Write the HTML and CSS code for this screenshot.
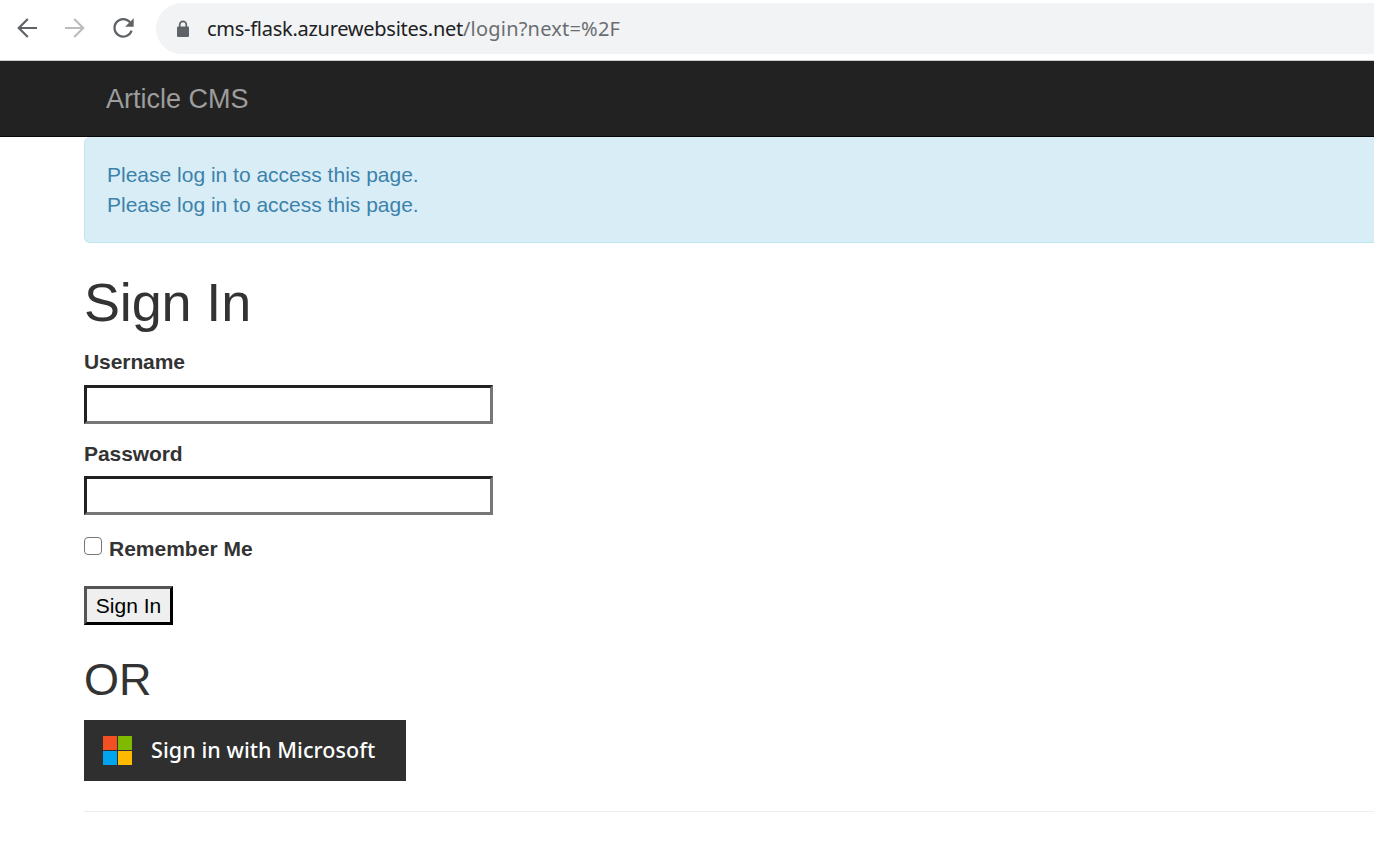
FILE: index.html
```html
<!DOCTYPE html>
<html lang="en">
<head>
<meta charset="utf-8">
<title>Article CMS</title>
<link rel="stylesheet" href="styles.css">
</head>
<body>
<div class="toolbar">
  <svg class="nav-icon" viewBox="0 0 24 24"><path d="M22 12H4M12.800 3L3.800 12l9 9"/></svg>
  <svg class="nav-icon disabled" viewBox="0 0 24 24"><path d="M2 12h18M11.200 3l9 9-9 9"/></svg>
  <svg class="nav-icon" viewBox="0 0 24 24"><path d="M19 6.200A8.800 8.800 0 1 0 20.600 14.700"/><path class="solid" d="M22.700 2.200v8.600h-8.600z"/></svg>
  <div class="address">
    <svg class="lock" viewBox="0 0 14 18"><path d="M3.700 8V4.700a3.300 3.300 0 0 1 6.600 0V8" fill="none" stroke="#5f6368" stroke-width="1.700"/><rect x="1" y="6.500" width="12" height="10.500" rx="1.300" fill="#5f6368"/></svg>
    <span class="url">cms-flask.azurewebsites.net<span class="path">/login?next=%2F</span></span>
  </div>
</div>
<nav class="navbar"><span class="brand">Article CMS</span></nav>
<main class="container">
  <div class="alert"><div>Please log in to access this page.</div><div>Please log in to access this page.</div></div>
  <h1>Sign In</h1>
  <form>
    <label class="field-label" for="username">Username</label>
    <input class="field" id="username" type="text">
    <label class="field-label second" for="password">Password</label>
    <input class="field" id="password" type="password">
    <label class="remember"><input class="check" type="checkbox"><span>Remember Me</span></label>
    <button class="submit" type="button">Sign In</button>
  </form>
  <h2>OR</h2>
  <a class="microsoft">
    <svg class="logo" viewBox="0 0 29 29"><path fill="#f25022" d="M0 0h14v14H0z"/><path fill="#7fba00" d="M15 0h14v14H15z"/><path fill="#00a4ef" d="M0 15h14v14H0z"/><path fill="#ffb900" d="M15 15h14v14H15z"/></svg>
    <span class="ms-text">Sign in with Microsoft</span>
  </a>
  <hr>
</main>
</body>
</html>
```
FILE: styles.css
```css
* { box-sizing: border-box; }
body { margin: 0; height: 847px; overflow: hidden; background: #fff; color: #333; font: 21px/30px "Liberation Sans", Arial, sans-serif; }
.toolbar { display: flex; align-items: center; height: 61px; padding: 0 0 3px 15px; border-bottom: 1px solid #ccc; }
.nav-icon { flex: none; width: 24px; height: 24px; margin: 0 24px 2px 0; fill: none; stroke: #5f6368; stroke-width: 2.2; }
.nav-icon.disabled { stroke: #babcbe; }
.nav-icon .solid { fill: #5f6368; stroke: none; }
.address { flex: 1; display: flex; align-items: center; height: 51px; margin-left: -3px; padding-left: 20px; background: #f1f3f4; border-radius: 26px 0 0 26px; }
.lock { width: 14px; height: 18px; margin-right: 17px; }
.url { font: 20px/28px "Noto Sans", "Open Sans", sans-serif; letter-spacing: -0.270px; color: #202124; white-space: nowrap; }
.path { letter-spacing: 0.200px; color: #6a6d71; }
.navbar { height: 76px; padding: 23px 0 0 106px; background: #222; border-bottom: 1px solid #080808; }
.brand { display: block; color: #9d9d9d; font-size: 27px; line-height: 30px; }
.container { padding-left: 84px; }
.alert { height: 106px; padding: 23px 22px; color: #3c82aa; background: #d9edf7; border: 1px solid #bce8f1; border-width: 0 0 1px 1px; border-radius: 6px 0 0 6px; }
h1, h2 { margin: 0; font-weight: 400; line-height: 1.1; }
h1 { margin-top: 30px; font-size: 54px; height: 60px; letter-spacing: -0.150px; }
h2 { margin-top: 30px; font-size: 45px; height: 50px; }
form { padding-top: 14px; }
.field-label { display: block; height: 38px; font-weight: 700; letter-spacing: -0.080px; }
.field-label.second { height: 37px; margin-top: 15px; }
.field { display: block; width: 409px; height: 39px; padding: 0 6px; background: #fff; border: 3px solid; border-color: #212121 #767676 #767676 #212121; border-radius: 0; font: inherit; }
.remember { display: flex; height: 30px; margin-top: 19px; font-weight: 700; }
.check { appearance: none; width: 18px; height: 18px; margin: 3px 7px 0 0; background: #fff; border: 1.5px solid #767676; border-radius: 4px; }
.submit { display: block; width: 89px; height: 39px; margin-top: 22px; padding: 0; background: #efefef; border: 3px solid; border-color: #555 #000 #000 #555; border-radius: 0; color: #000; font: inherit; }
.microsoft { display: flex; align-items: center; width: 322px; height: 61px; margin-top: 15px; padding-left: 19px; background: #2f2f2f; color: #fff; }
.logo { width: 29px; height: 29px; margin-right: 19px; }
.ms-text { padding-bottom: 2px; font: 500 21.500px/28px "Noto Sans", "Open Sans", sans-serif; letter-spacing: 0.070px; white-space: nowrap; }
hr { height: 1px; margin: 30px 0 0; border: 0; background: #eee; }
```
